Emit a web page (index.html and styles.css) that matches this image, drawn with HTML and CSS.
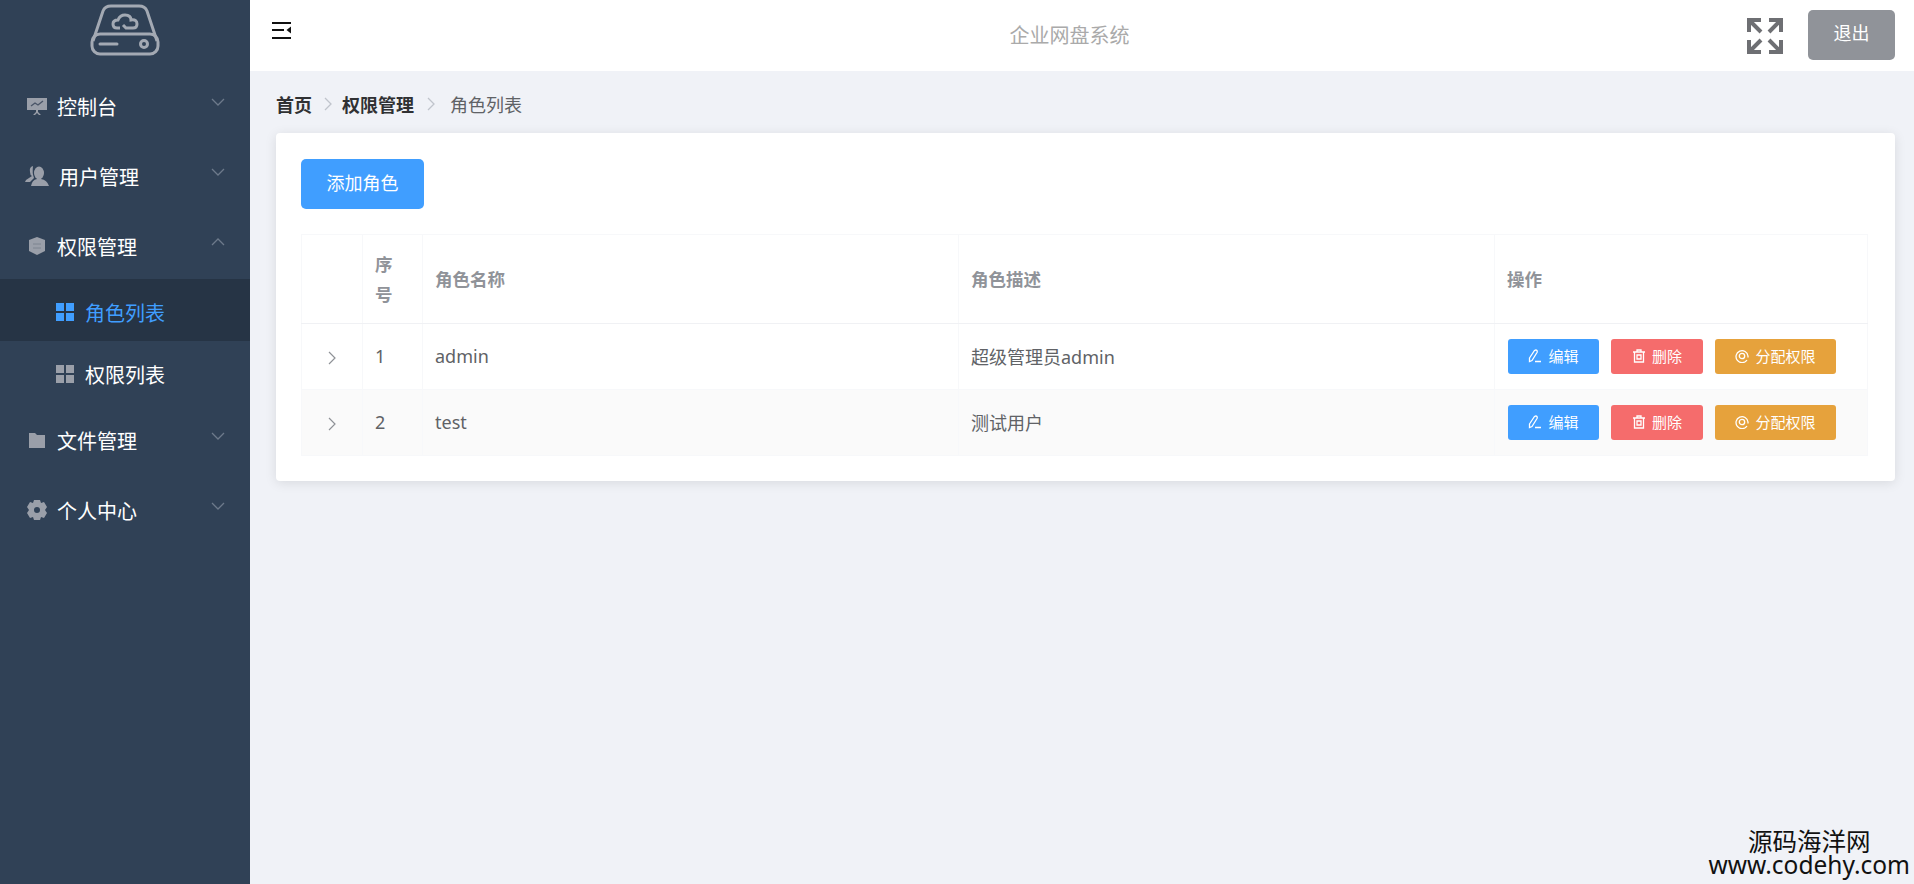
FILE: index.html
```html
<!DOCTYPE html>
<html lang="zh-CN">

<head>
  <meta charset="UTF-8">
  <title>企业网盘系统</title>
  <link rel="stylesheet" href="styles.css">
</head>

<body>
  <aside class="sidebar">
    <div class="logo">
      <svg width="70" height="52" viewBox="0 0 70 52" fill="none" stroke="#a3a9b3" stroke-width="3">
        <path d="M3 37 L13 7 Q15 2 21 2 H49 Q55 2 57 7 L67 37" />
        <rect x="2" y="30" width="66" height="20" rx="8" />
        <path d="M10 40 H27" stroke-linecap="round" />
        <circle cx="54" cy="40" r="3.5" />
        <path d="M30 24 H27 Q23 24 23 20 Q23 16 28 16 Q30 11 35 11 Q41 11 41 16 Q47 15 47 20 Q47 24 43 24 H36 L33 21" />
      </svg>
    </div>
    <nav>
      <div class="menu-item">
        <svg class="menu-icon" width="20" height="20" viewBox="0 0 20 20" fill="#9a9fa9">
          <path d="M0 2 H20 V14 H11 V16 L14 19 H12 L10 17 L8 19 H6 L9 16 V14 H0 Z" />
          <path d="M4 10 L8 7 L11 9 L16 5" fill="none" stroke="#4a5568" stroke-width="1.4" />
        </svg>
        <span class="menu-text">控制台</span>
        <svg class="arrow" width="14" height="8" viewBox="0 0 14 8"><path d="M1 1 L7 7 L13 1" /></svg>
      </div>
      <div class="menu-item">
        <svg class="menu-icon" width="24" height="22" viewBox="0 0 24 22" fill="#9a9fa9">
          <ellipse cx="14" cy="8" rx="5" ry="6.5" />
          <path d="M6 21 Q7 15 12 14 H16 Q22 15 24 21 Z" />
          <path d="M8 1 Q4 2 5 7 Q5 10 7 11 L1 15 L0 17 H5 L9 13 Q7 8 8 1 Z" />
        </svg>
        <span class="menu-text menu-text-wide">用户管理</span>
        <svg class="arrow" width="14" height="8" viewBox="0 0 14 8"><path d="M1 1 L7 7 L13 1" /></svg>
      </div>
      <div class="menu-item">
        <svg class="menu-icon" width="20" height="20" viewBox="0 0 20 20" fill="#9a9fa9">
          <path d="M10 1 L18 4 V15 L10 19 L2 15 V4 Z" />
          <path d="M6 8 H14 M6 12 H14" stroke="#7d8490" stroke-width="1" />
        </svg>
        <span class="menu-text">权限管理</span>
        <svg class="arrow" width="14" height="8" viewBox="0 0 14 8"><path d="M1 7 L7 1 L13 7" /></svg>
      </div>
      <div class="sub-item active">
        <span class="grid-icon"><i></i><i></i><i></i><i></i></span>
        <span>角色列表</span>
      </div>
      <div class="sub-item">
        <span class="grid-icon"><i></i><i></i><i></i><i></i></span>
        <span>权限列表</span>
      </div>
      <div class="menu-item">
        <svg class="menu-icon" width="20" height="20" viewBox="0 0 20 20" fill="#9a9fa9">
          <path d="M2 3 H8 L10 5 H18 V18 H2 Z" />
        </svg>
        <span class="menu-text">文件管理</span>
        <svg class="arrow" width="14" height="8" viewBox="0 0 14 8"><path d="M1 1 L7 7 L13 1" /></svg>
      </div>
      <div class="menu-item">
        <svg class="menu-icon" width="22" height="22" viewBox="0 0 22 22" fill="#9a9fa9">
          <path fill-rule="evenodd" d="M8 1 H14 L15 4 L18 3 L21 8 L19 11 L21 14 L18 19 L15 18 L14 21 H8 L7 18 L4 19 L1 14 L3 11 L1 8 L4 3 L7 4 Z M11 8 A3 3 0 1 0 11 14 A3 3 0 1 0 11 8 Z" />
        </svg>
        <span class="menu-text">个人中心</span>
        <svg class="arrow" width="14" height="8" viewBox="0 0 14 8"><path d="M1 1 L7 7 L13 1" /></svg>
      </div>
    </nav>
  </aside>

  <div class="main">
    <header class="topbar">
      <svg class="fold-icon" width="20" height="18" viewBox="0 0 20 18" fill="#111">
        <rect x="0" y="0" width="19" height="2" />
        <rect x="0" y="7" width="12" height="2" />
        <rect x="0" y="15" width="19" height="2" />
        <path d="M19 4.5 V11.5 L14.5 8 Z" />
      </svg>
      <div class="system-title">企业网盘系统</div>
      <svg class="screen-icon" width="36" height="36" viewBox="0 0 36 36" fill="none" stroke="#6e6f73" stroke-width="4">
        <path d="M2 14 V2 H14 M3 3 L14 14" />
        <path d="M34 14 V2 H22 M33 3 L22 14" />
        <path d="M2 22 V34 H14 M3 33 L14 22" />
        <path d="M34 22 V34 H22 M33 33 L22 22" />
      </svg>
      <button class="logout-btn">退出</button>
    </header>

    <div class="content">
      <div class="breadcrumb">
        <b>首页</b>
        <svg class="crumb-sep crumb-sep-first" width="10" height="14" viewBox="0 0 10 14"><path d="M2 1 L8 7 L2 13" /></svg>
        <b>权限管理</b>
        <svg class="crumb-sep" width="10" height="14" viewBox="0 0 10 14"><path d="M2 1 L8 7 L2 13" /></svg>
        <span>角色列表</span>
      </div>

      <div class="card">
        <button class="add-btn">添加角色</button>
        <table class="role-table">
          <colgroup>
            <col class="col-expand">
            <col class="col-index">
            <col class="col-name">
            <col class="col-desc">
            <col class="col-ops">
          </colgroup>
          <thead>
            <tr>
              <th></th>
              <th class="th-index">序号</th>
              <th>角色名称</th>
              <th>角色描述</th>
              <th>操作</th>
            </tr>
          </thead>
          <tbody>
            <tr>
              <td class="expand-cell"><svg class="expand-icon" width="10" height="14" viewBox="0 0 10 14"><path d="M2 1 L8 7 L2 13" /></svg></td>
              <td>1</td>
              <td>admin</td>
              <td>超级管理员admin</td>
              <td>
                <div class="ops">
                  <button class="op-btn op-edit">
                    <svg width="14" height="14" viewBox="0 0 14 14"><path d="M1.5 9 L6.5 1.5 Q8 0.5 9 1.5 Q9.5 2.5 9 3.5 L4 11.5 L1.5 12.5 Z M7 12.5 H13" /></svg>编辑
                  </button>
                  <button class="op-btn op-delete">
                    <svg width="14" height="14" viewBox="0 0 14 14"><path d="M1 3 H13 M5 3 V1 H9 V3 M2.5 3 V13 H11.5 V3 M5 6 H9 V10 H5 Z" /></svg>删除
                  </button>
                  <button class="op-btn op-assign">
                    <svg width="14" height="14" viewBox="0 0 14 14"><path d="M12 11 A6 6 0 1 1 13 7 V8.5" /><circle cx="7" cy="7" r="2.7" /></svg>分配权限
                  </button>
                </div>
              </td>
            </tr>
            <tr class="striped">
              <td class="expand-cell"><svg class="expand-icon" width="10" height="14" viewBox="0 0 10 14"><path d="M2 1 L8 7 L2 13" /></svg></td>
              <td>2</td>
              <td>test</td>
              <td>测试用户</td>
              <td>
                <div class="ops">
                  <button class="op-btn op-edit">
                    <svg width="14" height="14" viewBox="0 0 14 14"><path d="M1.5 9 L6.5 1.5 Q8 0.5 9 1.5 Q9.5 2.5 9 3.5 L4 11.5 L1.5 12.5 Z M7 12.5 H13" /></svg>编辑
                  </button>
                  <button class="op-btn op-delete">
                    <svg width="14" height="14" viewBox="0 0 14 14"><path d="M1 3 H13 M5 3 V1 H9 V3 M2.5 3 V13 H11.5 V3 M5 6 H9 V10 H5 Z" /></svg>删除
                  </button>
                  <button class="op-btn op-assign">
                    <svg width="14" height="14" viewBox="0 0 14 14"><path d="M12 11 A6 6 0 1 1 13 7 V8.5" /><circle cx="7" cy="7" r="2.7" /></svg>分配权限
                  </button>
                </div>
              </td>
            </tr>
          </tbody>
        </table>
      </div>
    </div>
  </div>

  <div class="watermark">
    <div class="watermark-cn">源码海洋网</div>
    <div class="watermark-en">www.codehy.com</div>
  </div>
</body>

</html>
```

FILE: styles.css
```css
* {
  box-sizing: border-box;
}

html,
body {
  height: 100%;
}

body {
  margin: 0;
  display: flex;
  overflow: hidden;
  background-color: #f0f2f7;
  font-family: "Noto Sans", "Noto Sans CJK SC", sans-serif;
}

button {
  border: none;
  cursor: pointer;
  font-family: inherit;
}

/* sidebar */
.sidebar {
  width: 250px;
  flex-shrink: 0;
  background-color: #304156;
  color: #fff;
}

.logo {
  height: 71px;
  padding-top: 4px;
  padding-left: 90px;
}

.menu-item {
  height: 70px;
  display: flex;
  align-items: center;
  padding-left: 25px;
  padding-right: 25px;
  font-size: 20px;
}

.menu-icon {
  width: 24px;
  flex-shrink: 0;
}

.menu-text {
  margin-left: 8px;
  flex: 1;
}

.menu-text-wide {
  margin-left: 10px;
}

.arrow {
  margin-top: -8px;
  fill: none;
  stroke: #6d7a8b;
  stroke-width: 1.3;
}

.sub-item {
  height: 62px;
  display: flex;
  align-items: center;
  padding-left: 56px;
  font-size: 20px;
}

.sub-item.active {
  margin-top: -2px;
  margin-bottom: 2px;
  padding-top: 4px;
  background-color: #263445;
  color: #409eff;
}

.grid-icon {
  width: 18px;
  height: 18px;
  margin-right: 11px;
  display: grid;
  grid-template-columns: 8px 8px;
  grid-template-rows: 8px 8px;
  gap: 2px;
}

.grid-icon i {
  background-color: #9a9fa9;
}

.active .grid-icon i {
  background-color: #409eff;
}

/* main area */
.main {
  flex: 1;
  min-width: 0;
}

.topbar {
  height: 71px;
  display: flex;
  align-items: center;
  padding-left: 22px;
  padding-right: 19px;
  background-color: #fff;
}

.fold-icon {
  margin-top: -9px;
}

.system-title {
  flex: 1;
  padding-left: 100px;
  padding-bottom: 2px;
  text-align: center;
  font-size: 20px;
  color: #aaa;
}

.screen-icon {
  margin-right: 25px;
}

.logout-btn {
  width: 87px;
  height: 50px;
  margin-top: -2px;
  padding-bottom: 6px;
  border-radius: 5px;
  background-color: #909399;
  color: #fff;
  font-size: 18px;
}

.content {
  padding-left: 26px;
  padding-right: 19px;
}

.breadcrumb {
  height: 62px;
  padding-top: 4px;
  display: flex;
  align-items: center;
  font-size: 18px;
  color: #606266;
}

.breadcrumb b {
  color: #303133;
}

.crumb-sep {
  margin-left: 12px;
  margin-right: 14px;
  fill: none;
  stroke: #c0c4cc;
  stroke-width: 1.3;
}

.crumb-sep-first {
  margin-left: 11px;
  margin-right: 9px;
}

.card {
  height: 348px;
  padding: 26px 25px 0;
  background-color: #fff;
  border-radius: 4px;
  box-shadow: 0 2px 12px rgba(0, 0, 0, 0.1);
}

.add-btn {
  display: block;
  width: 123px;
  height: 50px;
  padding-bottom: 6px;
  border-radius: 5px;
  background-color: #409eff;
  color: #fff;
  font-size: 18px;
}

/* table */
.role-table {
  width: 1566px;
  margin-top: 25px;
  table-layout: fixed;
  border-collapse: collapse;
  border: 1px solid #f7f8fa;
  font-size: 18px;
  color: #606266;
}

.col-expand {
  width: 61px;
}

.col-index {
  width: 60px;
}

.col-name {
  width: 536px;
}

.col-desc {
  width: 536px;
}

.col-ops {
  width: 373px;
}

.role-table th {
  height: 89px;
  padding: 0 12px;
  text-align: left;
  font-size: 17.5px;
  color: #909399;
  font-weight: 700;
  line-height: 30px;
  border-right: 1px solid #f7f8fa;
  border-bottom: 1px solid #f0f1f4;
}

.role-table .th-index {
  padding-right: 20px;
}

.role-table td {
  height: 66px;
  padding: 0 12px 2px;
  border-right: 1px solid #f7f8fa;
  border-bottom: 1px solid #f7f8fa;
}

.striped td {
  background-color: #fafafa;
}

.expand-cell {
  text-align: center;
}

.expand-icon {
  vertical-align: middle;
  fill: none;
  stroke: #8f9297;
  stroke-width: 1.2;
}

.ops {
  display: flex;
  gap: 12px;
  margin-top: 2px;
  margin-left: 1px;
}

.op-btn {
  height: 35px;
  display: flex;
  align-items: center;
  justify-content: center;
  gap: 6px;
  padding: 0 0 2px;
  border-radius: 3px;
  color: #fff;
  font-size: 15px;
}

.op-btn svg {
  fill: none;
  stroke: #fff;
  stroke-width: 1.3;
}

.op-edit {
  width: 91px;
  background-color: #409eff;
}

.op-delete {
  width: 92px;
  background-color: #f56c6c;
}

.op-assign {
  width: 121px;
  background-color: #e6a23c;
}

/* pasted over the page corner */
.watermark {
  position: absolute;
  right: 4px;
  bottom: 8px;
  text-align: center;
  color: #111;
  line-height: 1;
}

.watermark-cn {
  font-size: 24.5px;
  line-height: 23px;
}

.watermark-en {
  font-size: 24.5px;
  line-height: 23px;
}
```
